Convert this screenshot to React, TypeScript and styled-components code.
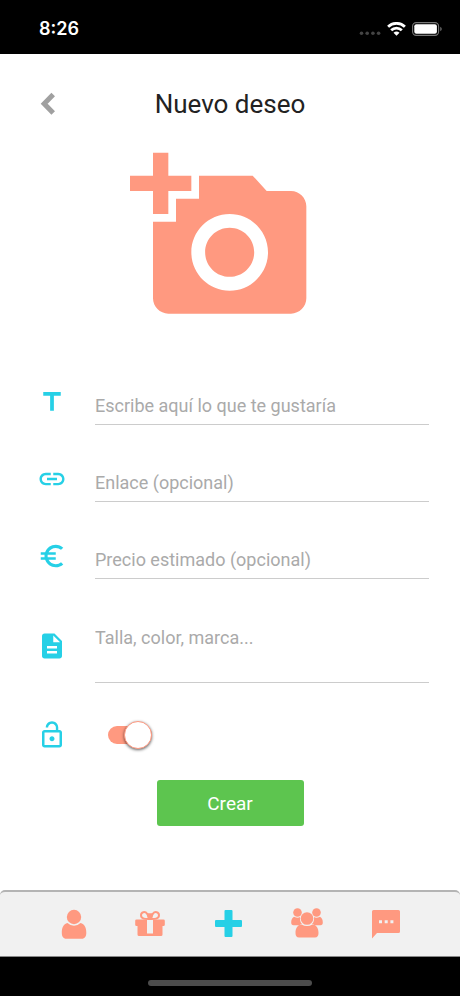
import React from "react";
import styled, { createGlobalStyle } from "styled-components";

const coral = "#ff9980";
const cyan = "#26d0e6";

const GlobalStyle = createGlobalStyle`
  * { box-sizing: border-box; }
  body { margin: 0; background: #fff; font-family: Roboto, sans-serif; }
  button { font: inherit; border: 0; padding: 0; background: none; cursor: pointer; }
`;

const Screen = styled.div`
  display: flex;
  flex-direction: column;
  min-height: 100vh;
`;

const StatusBar = styled.div`
  display: flex;
  align-items: center;
  justify-content: space-between;
  height: 54px;
  padding: 3px 18px 0 39px;
  background: #000;
  color: #fff;
`;

const Clock = styled.time`
  font: 600 18px/24px Inter, sans-serif;
`;

const StatusIcons = styled.div`
  display: flex;
  align-items: center;
  gap: 6px;
`;

const Header = styled.header`
  display: grid;
  grid-template-columns: 48px 1fr 48px;
  align-items: center;
  padding: 34px 24px 0;
`;

const BackButton = styled.button`
  display: flex;
  align-items: center;
  justify-content: center;
  height: 32px;
`;

const Title = styled.h1`
  margin: 0;
  text-align: center;
  font-size: 26px;
  font-weight: 400;
  line-height: 32px;
  color: #222;
`;

const Main = styled.main`
  flex: 1;
  display: flex;
  flex-direction: column;
`;

const PhotoButton = styled.button`
  display: block;
  align-self: center;
  height: 184px;
  margin: 25px 16px 0 0;
  color: ${coral};
`;

const Form = styled.form`
  display: flex;
  flex-direction: column;
  padding-top: 19px;
`;

const Row = styled.div`
  display: grid;
  grid-template-columns: 30px 1fr;
  column-gap: 28px;
  padding: 38px 31px 0 37px;
`;

const IconLabel = styled.label`
  display: flex;
  align-items: center;
  padding-bottom: 8px;
  color: ${cyan};
`;

const fieldStyles = `
  display: block;
  width: 100%;
  padding: 0;
  border: 0;
  border-bottom: 1px solid #ccc;
  border-radius: 0;
  outline: 0;
  background: none;
  color: #222;
  font: 400 18px/38px Roboto, sans-serif;
  &::placeholder { color: #aaa; opacity: 1; }
`;

const TextInput = styled.input`
  ${fieldStyles}
  height: 39px;
`;

const TextArea = styled.textarea`
  ${fieldStyles}
  height: 66px;
  padding-top: 2px;
  resize: none;
  overflow: hidden;
`;

const SwitchRow = styled.div`
  display: flex;
  align-items: center;
  gap: 41px;
  padding: 37px 31px 0 37px;
`;

const SwitchLabel = styled.label`
  display: flex;
  color: ${cyan};
`;

const Switch = styled.input`
  appearance: none;
  display: flex;
  align-items: center;
  width: 44px;
  height: 18px;
  margin: 0;
  border-radius: 9px;
  background: #ccc;
  cursor: pointer;
  &::before {
    content: "";
    width: 26px;
    height: 26px;
    border: 1px solid ${coral};
    border-radius: 50%;
    background: #fff;
    box-shadow: 0 1px 3px rgba(0, 0, 0, 0.6);
  }
  &:checked { background: ${coral}; justify-content: flex-end; }
`;

const SubmitButton = styled.button`
  align-self: center;
  width: 147px;
  height: 46px;
  margin: 30px 0;
  border-radius: 3px;
  background: #5dc54f;
  color: #fff;
  font-size: 19px;
`;

const TabBar = styled.nav`
  display: flex;
  align-items: center;
  justify-content: space-between;
  height: 67px;
  padding: 0 60px 0 62px;
  border-top: 2px solid #b4b4b4;
  border-bottom: 1px solid #888;
  border-radius: 5px 5px 0 0;
  background: #f1f1f1;
`;

const Tab = styled.button<{ $active?: boolean }>`
  display: flex;
  height: 32px;
  color: ${(p) => (p.$active ? cyan : coral)};
  svg { overflow: visible; }
`;

const HomeArea = styled.div`
  display: flex;
  justify-content: center;
  height: 39px;
  padding-top: 23px;
  background: #000;
`;

const HomeIndicator = styled.div`
  width: 164px;
  height: 6px;
  border-radius: 3px;
  background: #4c4c4c;
`;

const Icon = ({ d, size = 30 }: { d: string; size?: number }) => (
  <svg width={size} height={size} viewBox="0 0 24 24" fill="currentColor" aria-hidden="true">
    <path d={d} fillRule="evenodd" />
  </svg>
);

const paths = {
  camera:
    "M3 4V1h2v3h3v2H5v3H3V6H0V4h3zM6 10V7h3V4h7l1.83 2H21c1.1 0 2 .9 2 2v12c0 1.1-.9 2-2 2H5c-1.1 0-2-.9-2-2V10h3zM13 19c2.76 0 5-2.24 5-5s-2.24-5-5-5-5 2.24-5 5 2.24 5 5 5zM9.8 14c0 1.77 1.43 3.2 3.2 3.2s3.2-1.43 3.2-3.2-1.43-3.2-3.2-3.2-3.2 1.43-3.2 3.2z",
  title: "M5 4v3h5.5v12h3V7H19V4z",
  link: "M3.9 12c0-1.71 1.39-3.1 3.1-3.1h4V7H7c-2.76 0-5 2.24-5 5s2.24 5 5 5h4v-1.9H7c-1.71 0-3.1-1.39-3.1-3.1zM8 13h8v-2H8v2zm9-6h-4v1.9h4c1.71 0 3.1 1.39 3.1 3.1s-1.39 3.1-3.1 3.1h-4V17h4c2.76 0 5-2.24 5-5s-2.24-5-5-5z",
  euro: "M15 18.5c-2.51 0-4.68-1.42-5.76-3.5H15v-2H8.58c-.05-.33-.08-.66-.08-1s.03-.67.08-1H15V9H9.24C10.32 6.92 12.5 5.5 15 5.5c1.61 0 3.09.59 4.23 1.57L21 5.3C19.41 3.87 17.3 3 15 3c-3.92 0-7.24 2.51-8.48 6H3v2h3.06c-.04.33-.06.66-.06 1s.02.67.06 1H3v2h3.52c1.24 3.49 4.56 6 8.48 6 2.31 0 4.41-.87 6-2.3l-1.78-1.77c-1.13.98-2.6 1.57-4.22 1.57z",
  document:
    "M14 2H6c-1.1 0-1.99.9-1.99 2L4 20c0 1.1.89 2 1.99 2H18c1.1 0 2-.9 2-2V8l-6-6zM16 18H8v-2h8v2zM16 14H8v-2h8v2zM13 9V3.5L18.5 9H13z",
  lock: "M12 17c1.1 0 2-.9 2-2s-.9-2-2-2-2 .9-2 2 .9 2 2 2zM18 8h-1V6c0-2.76-2.24-5-5-5S7 3.24 7 6h1.9c0-1.71 1.39-3.1 3.1-3.1s3.1 1.39 3.1 3.1v2H6c-1.1 0-2 .9-2 2v10c0 1.1.9 2 2 2h12c1.1 0 2-.9 2-2V10c0-1.1-.9-2-2-2zM18 20H6V10h12v10z",
};

const PersonIcon = () => (
  <svg width="24" height="32" viewBox="4 0 24 32" fill="currentColor" aria-hidden="true">
    <circle cx="16" cy="9" r="7.2" />
    <path d="M9.5 15a9.3 9.3 0 0 0 13 0c4.200.8 5.800 5 5.800 9.800 0 3.600-1.400 6-4.600 6H8.400c-3.200 0-4.600-2.400-4.600-6 0-4.800 1.500-9 5.700-9.800z" />
  </svg>
);

const GiftIcon = () => (
  <svg width="30" height="32" viewBox="1 0 30 32" fill="currentColor" aria-hidden="true">
    <path
      d="M15.800 11C12.800 11 7 11.500 7 7.300 7 4 11 2.900 13.200 5.800ZM16.200 11C19.200 11 25 11.500 25 7.300 25 4 21 2.900 18.800 5.800Z"
      fill="none"
      stroke="currentColor"
      strokeWidth="2"
    />
    <path d="M12.800 5.300h6.400l-1 5.700h-4.400z" />
    <path
      d="M2.500 11.500h27q1.300 0 1.300 1.300v3.900q0 1.300-1.300 1.300H28.500v8.500q0 1.500-1.500 1.500H5q-1.500 0-1.500-1.500V18H2.500q-1.300 0-1.300-1.300v-3.900q0-1.300 1.300-1.300zM13 11.500v14h6v-14z"
      fillRule="evenodd"
    />
  </svg>
);

const PlusIcon = () => (
  <svg width="27" height="32" viewBox="2.500 0 27 32" fill="currentColor" aria-hidden="true">
    <path d="M13 2h6q1 0 1 1v9h8.500q1 0 1 1v5q0 1-1 1H20v9q0 1-1 1h-6q-1 0-1-1v-9H3.500q-1 0-1-1v-5q0-1 1-1H12V3q0-1 1-1z" />
  </svg>
);

const PeopleIcon = () => (
  <svg width="32" height="32" viewBox="0 0 32 32" fill="currentColor" aria-hidden="true">
    <circle cx="6.500" cy="4.500" r="4.300" />
    <circle cx="25.500" cy="4.500" r="4.300" />
    <circle cx="16" cy="10.500" r="6.300" />
    <path d="M3 8.800q4 1.700 6 .2-.5 4.500 2 7-1.800.5-2.700 1.200H2.500Q.2 17.200.2 14.500.2 10.500 3 8.800zM29 8.800q-4 1.700-6 .2.500 4.500-2 7 1.800.5 2.700 1.200h5.800q2.300 0 2.300-2.700 0-4-2.800-5.700z" />
    <path d="M10.500 16.500q5.500 3 11 0c4.200.4 6 4 6 8.500 0 2.900-1.100 4.500-3.500 4.500H8c-2.400 0-3.500-1.600-3.500-4.500 0-4.500 1.800-8.100 6-8.500z" />
  </svg>
);

const ChatIcon = () => (
  <svg width="28" height="32" viewBox="2 0 28 32" fill="currentColor" aria-hidden="true">
    <path
      d="M3.500 2h25q1.500 0 1.500 1.500v20q0 1.500-1.500 1.500H7l-5 5.500V3.500Q2 2 3.500 2zM9 12.300v3h3v-3zM14.700 12.300v3h3v-3zM20.400 12.300v3h3v-3z"
      fillRule="evenodd"
    />
  </svg>
);

const SignalIcon = () => (
  <svg width="22" height="16" viewBox="0 0 22 16" fill="#444" aria-hidden="true">
    <circle cx="2.500" cy="12.200" r="1.800" />
    <circle cx="8.200" cy="12.200" r="1.800" />
    <circle cx="13.900" cy="12.200" r="1.800" />
    <circle cx="19.600" cy="12.200" r="1.800" />
  </svg>
);

const WifiIcon = () => (
  <svg width="19" height="14" viewBox="0 0 19 14" aria-hidden="true">
    <path d="M1.100 4.800a12 12 0 0 1 16.800 0M4.200 8.200a7.600 7.600 0 0 1 10.600 0" fill="none" stroke="#fff" strokeWidth="2.800" />
    <path d="M6.500 10.800a4.400 4.400 0 0 1 6 0l-3 3z" fill="#fff" />
  </svg>
);

const BatteryIcon = () => (
  <svg width="30" height="14" viewBox="0 0 30 14" aria-hidden="true">
    <rect x=".6" y=".6" width="26" height="12.800" rx="3.600" fill="none" stroke="#777" strokeWidth="1.100" />
    <rect x="2.300" y="2.300" width="22.600" height="9.400" rx="2" fill="#fff" />
    <path d="M28.300 4.800q1.400.7 1.400 2.200t-1.400 2.200z" fill="#777" />
  </svg>
);

const fields = [
  { id: "wish", icon: paths.title, text: "Escribe aquí lo que te gustaría" },
  { id: "link", icon: paths.link, text: "Enlace (opcional)" },
  { id: "price", icon: paths.euro, text: "Precio estimado (opcional)" },
];

const tabs = [
  { name: "Perfil", icon: <PersonIcon /> },
  { name: "Regalos", icon: <GiftIcon /> },
  { name: "Nuevo deseo", icon: <PlusIcon />, active: true },
  { name: "Grupos", icon: <PeopleIcon /> },
  { name: "Mensajes", icon: <ChatIcon /> },
];

export default function App() {
  return (
    <Screen>
      <GlobalStyle />
      <StatusBar>
        <Clock>8:26</Clock>
        <StatusIcons>
          <SignalIcon />
          <WifiIcon />
          <BatteryIcon />
        </StatusIcons>
      </StatusBar>
      <Header>
        <BackButton type="button" aria-label="Volver">
          <svg width="16" height="24" viewBox="0 0 16 24" fill="none" stroke="#a0a0a0" strokeWidth="5" aria-hidden="true">
            <path d="M13.200 2.500 4.200 11.700l9 9.200" />
          </svg>
        </BackButton>
        <Title>Nuevo deseo</Title>
      </Header>
      <Main>
        <PhotoButton type="button" aria-label="Añadir foto">
          <Icon d={paths.camera} size={184} />
        </PhotoButton>
        <Form onSubmit={(e) => e.preventDefault()}>
          {fields.map((f) => (
            <Row key={f.id}>
              <IconLabel htmlFor={f.id} aria-label={f.text}>
                <Icon d={f.icon} />
              </IconLabel>
              <TextInput id={f.id} type="text" placeholder={f.text} />
            </Row>
          ))}
          <Row>
            <IconLabel htmlFor="details" aria-label="Detalles">
              <Icon d={paths.document} />
            </IconLabel>
            <TextArea id="details" placeholder="Talla, color, marca..." />
          </Row>
          <SwitchRow>
            <SwitchLabel htmlFor="public" aria-label="Deseo público">
              <Icon d={paths.lock} />
            </SwitchLabel>
            <Switch id="public" type="checkbox" role="switch" defaultChecked />
          </SwitchRow>
          <SubmitButton type="submit">Crear</SubmitButton>
        </Form>
      </Main>
      <TabBar>
        {tabs.map((t) => (
          <Tab key={t.name} type="button" aria-label={t.name} $active={t.active}>
            {t.icon}
          </Tab>
        ))}
      </TabBar>
      <HomeArea>
        <HomeIndicator />
      </HomeArea>
    </Screen>
  );
}
